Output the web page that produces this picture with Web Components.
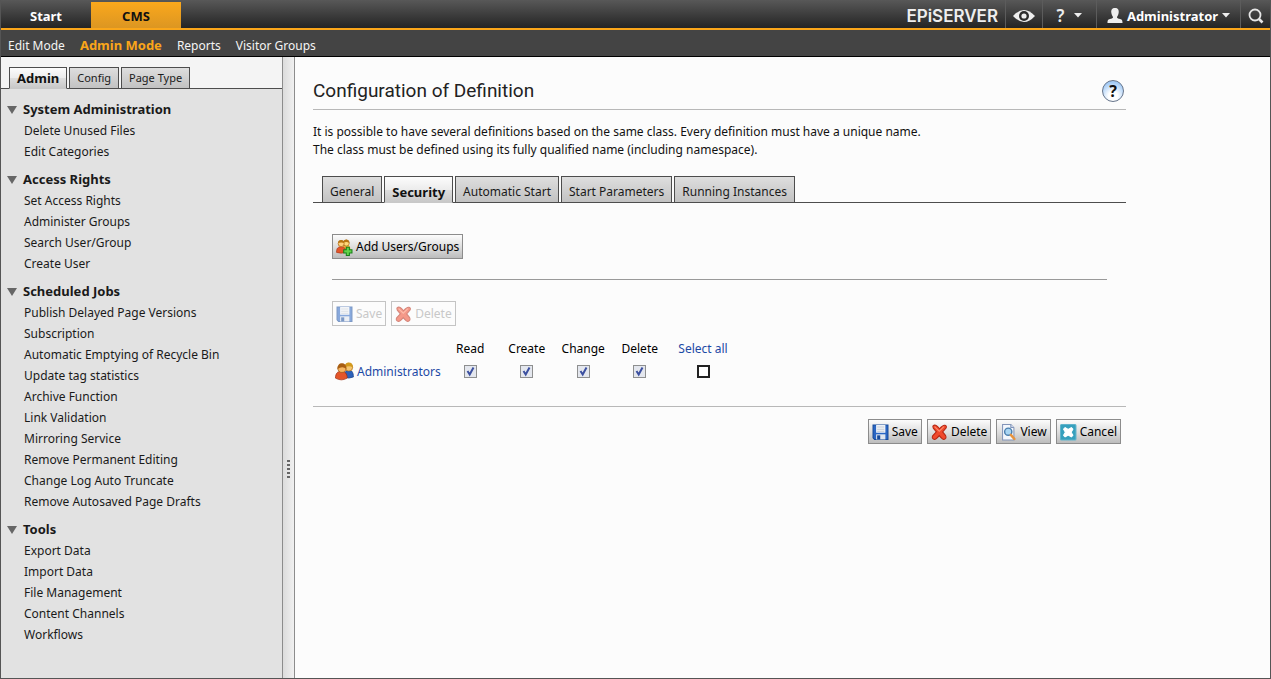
<!DOCTYPE html>
<html lang="en">
<head>
<meta charset="utf-8">
<meta name="viewport" content="width=device-width, initial-scale=1">
<title>Configuration of Definition</title>
<style>
body {
  margin: 0;
  font: 12px/16px "Noto Sans", "Open Sans", sans-serif;
  color: #1a1a1a;
  background: #fcfcfc;
  --line: #4d4d4d;
  --rule: #b8b8b8;
  --orange: #faa61a;
  --link: #1c4aa5;
  --strong: bold 13px/16px "Noto Sans", "Open Sans", sans-serif;
}
</style>
</head>
<body>
<cms-app>
  <top-bar slot="header"></top-bar>
  <sub-nav slot="header"></sub-nav>
  <side-bar slot="side">
    <nav-group heading="System Administration" items="Delete Unused Files|Edit Categories"></nav-group>
    <nav-group heading="Access Rights" items="Set Access Rights|Administer Groups|Search User/Group|Create User"></nav-group>
    <nav-group heading="Scheduled Jobs" items="Publish Delayed Page Versions|Subscription|Automatic Emptying of Recycle Bin|Update tag statistics|Archive Function|Link Validation|Mirroring Service|Remove Permanent Editing|Change Log Auto Truncate|Remove Autosaved Page Drafts"></nav-group>
    <nav-group heading="Tools" items="Export Data|Import Data|File Management|Content Channels|Workflows"></nav-group>
  </side-bar>
  <definition-page>
    <span slot="title">Configuration of Definition</span>
    <p slot="intro" style="margin:0">It is possible to have several definitions based on the same class. Every definition must have a unique name.<br>The class must be defined using its fully qualified name (including namespace).</p>
    <security-panel></security-panel>
    <tool-button slot="actions" icon="save">Save</tool-button>
    <tool-button slot="actions" icon="delete">Delete</tool-button>
    <tool-button slot="actions" icon="view">View</tool-button>
    <tool-button slot="actions" icon="cancel">Cancel</tool-button>
  </definition-page>
</cms-app>

<script>
function define(name, html) {
  customElements.define(name, class extends HTMLElement {
    connectedCallback() {
      if (this.shadowRoot) return;
      const root = this.attachShadow({ mode: 'open' });
      root.innerHTML = typeof html === 'function' ? html(this) : html;
    }
  });
}

const icons = {
  save: `<path d="M1 1h14.5v14H2.5L1 13.500z" fill="#2a66c4" stroke="#174a99"/><path d="M4 1h9v7.500H4z" fill="#f3f6fa"/><path d="M5 3h7M5 5h7M5 7h7" stroke="#c3cad4"/><path d="M4 10h9v5H4z" fill="#dfe5ee"/><path d="M5 11h3v4H5z" fill="#174a99"/>`,
  delete: `<path d="M3.500 1Q5.500 1 8.300 4.600Q11.500 .8 13.500 1.200Q15.800 2 14.500 4L11.300 7.700L14.200 11.300Q15.500 14.300 12.500 15Q11 15 8 11.300Q5 15 3.300 15Q.3 14 1.600 11.500L5.200 7.600L2.200 4Q1 1.500 3.500 1z" fill="#f0492c" stroke="#b52612"/><path d="M3.500 2.500L8 7L12.500 2.500" stroke="#ff8b6b" fill="none"/>`,
  view: `<path d="M2.500 .5h8l3 3v12h-11z" fill="#f4f7fc" stroke="#8294b8"/><path d="M10.500 .5v3h3" fill="#d3def0" stroke="#8294b8"/><circle cx="8" cy="7.500" r="3.500" fill="#a9d5f2" stroke="#4b7fae" stroke-width="1.400"/><path d="M10.500 10.500L14 14.500" stroke="#e8933c" stroke-width="2.400" stroke-linecap="round"/>`,
  cancel: `<rect x=".5" y=".5" width="15" height="15" rx="1" fill="#36a0bd" stroke="#5fb3cb"/><path d="M3.500 5L5 3.500L8 5.300L11 3.500L12.500 5L10.800 8L12.500 11L11 12.500L8 10.800L5 12.500L3.500 11L5.200 8z" fill="#fff" stroke="#fff" stroke-linejoin="round"/>`,
  users: `<path d="M8 13c0-4 1.500-6 4-6s4 2 4 6q-4 2-8 0z" fill="#2d62ba" stroke="#193f85" stroke-width=".6"/><circle cx="12" cy="4.500" r="3.400" fill="#f4c46f" stroke="#a86716" stroke-width=".6"/><path d="M8.500 5Q8.500 .5 12 .5T15.500 5Q12.500 2.500 8.500 5z" fill="#d39a1d"/><path d="M.4 14c0-4 1.800-6 5-6s5.200 2 5.200 6q-5 3-10.200 0z" fill="#e4562a" stroke="#9c2c10" stroke-width=".6"/><circle cx="6" cy="5.500" r="3.600" fill="#f6b662" stroke="#96520f" stroke-width=".6"/><path d="M2.200 6Q2.200 1 6 1t3.800 5Q6.500 3 2.200 6z" fill="#a85e12"/>`,
  add: `<path d="M6 11c0-4 1-5.500 4-5.500s4 1.500 4 5.500z" fill="#e9b238"/><circle cx="10" cy="4" r="2.900" fill="#ffd978" stroke="#a86716" stroke-width=".7"/><path d="M7 3.500Q7.500 .6 10 .6t3 3.200Q10.500 2 7 3.500z" fill="#b87512"/><path d="M.5 13c0-4 1.400-5.500 4.500-5.500S9.500 9 9.500 13q-4.500 1.500-9 0z" fill="#e4562a" stroke="#a53215" stroke-width=".6"/><circle cx="5" cy="4.500" r="2.900" fill="#ffd07c" stroke="#a86716" stroke-width=".7"/><path d="M2 4Q2 1 5 1t3 3Q5 2.600 2 4z" fill="#b87512"/><path d="M10 8h3v2.500h2.500v3H13V16h-3v-2.500H7.500v-3H10z" fill="#62d34a" stroke="#18801a"/>`
};
define('epi-icon', el => `<style>:host{display:block;width:17px;height:17px}svg{display:block;width:100%;height:100%}</style><svg viewBox="0 0 16.500 16.500" aria-hidden="true">${icons[el.getAttribute('name')]}</svg>`);

define('tool-button', el => `<style>
:host{display:block}
button{display:flex;align-items:center;gap:3px;height:25px;margin:0;padding:1px 3px 0;border:1px solid #8c8c8c;border-radius:0;background:linear-gradient(#fcfcfc,#dcdcdc 55%,#bcbcbc);font:inherit;color:#000}
button:disabled{background:none;border-color:#c4c4c4;color:#c8c8c8}
button:disabled epi-icon{opacity:.55}
</style><button type="button" ${el.hasAttribute('disabled') ? 'disabled' : ''}><epi-icon name="${el.getAttribute('icon')}"></epi-icon><slot></slot></button>`);

define('tab-strip', el => {
  const tabs = el.getAttribute('tabs').split('|');
  const current = el.getAttribute('current');
  return `<style>
:host{display:flex;gap:2px;padding-left:9px;border-bottom:1px solid var(--line)}
button{height:var(--tab-height,27px);margin:0 0 -1px;padding:var(--tab-drop,4px) 7px 0;border:1px solid var(--line);border-radius:0;background:linear-gradient(#dedede,#c2c2c2);font:inherit;color:inherit}
button[aria-selected=true]{font:var(--strong);background:linear-gradient(#fcfcfc,#ececec 50%,#dedede 51%,#c8c8c8);border-bottom-color:#c8c8c8;color:#111}
</style>` + tabs.map(t => `<button type="button" role="tab" aria-selected="${t === current}">${t}</button>`).join('');
});

define('cms-app', `<style>
:host{display:flex;flex-direction:column;min-height:100vh;box-sizing:border-box;border:1px solid #555;border-top:0}
.body{flex:1;display:flex}
.splitter{flex:none;width:11px;border:solid #8c8c8c;border-width:0 1px;background:linear-gradient(90deg,#dcdcdc,#f0f0f0);display:flex;flex-direction:column;align-items:center;justify-content:center;padding-top:202px;gap:2px}
.splitter i{width:3px;height:2px;background:#666}
main{flex:1;min-width:0}
</style><header><slot name="header"></slot></header>
<div class="body"><slot name="side"></slot><div class="splitter"><i></i><i></i><i></i><i></i><i></i></div><main><slot></slot></main></div>`);

define('top-bar', `<style>
:host{display:flex;height:28px;border-bottom:2px solid var(--orange);background:linear-gradient(#585858,#242424);color:#fff;font:var(--strong)}
a{color:inherit;text-decoration:none;display:flex;align-items:center;justify-content:center}
.tab{width:90px;padding-top:4px}
.on{margin-top:2px;padding-top:2px;background:linear-gradient(#fba81c,#dc9622);color:#111}
.logo{margin-left:auto;padding:6px 7px 0 0;font:600 17px/20px Inter,sans-serif;color:#eee}
.cell{border-left:1px solid #5c5c5c;box-sizing:border-box;height:28px;padding:3px 0 0;gap:4px;color:#eee}
svg{display:block}
.mark{font:600 17px/20px "Noto Sans",sans-serif}
</style>
<a class="tab" href="#start">Start</a><a class="tab on" href="#cms">CMS</a>
<span class="logo">EPiSERVER</span>
<a class="cell" style="width:37px" href="#preview" aria-label="Preview"><svg width="22" height="14" viewBox="0 0 22 14"><path d="M0 7Q11-5 22 7Q11 19 0 7z" fill="#eee"/><circle cx="11" cy="7" r="5" fill="#2c2c2c"/><circle cx="11" cy="7" r="2.600" fill="#eee"/></svg></a>
<a class="cell" style="width:54px;gap:10px" href="#help"><span class="mark">?</span><svg width="8" height="5" viewBox="0 0 8 5"><path d="M0 0h8L4 4.500z" fill="#eee"/></svg></a>
<a class="cell" style="width:144px" href="#user"><svg width="16" height="15" viewBox="0 0 16 15"><path d="M8 0c3 0 4 2 3.700 4.500C11.500 7 10.500 8 10 9c0 1 .5 1.300 2 1.800C15 11.500 15.500 12 15.500 15H.5c0-3 .5-3.500 3.500-4.200C5.500 10.300 6 10 6 9 5.500 8 4.500 7 4.300 4.500 4 2 5 0 8 0z" fill="#eee"/></svg><span style="color:#fff">Administrator</span><svg width="8" height="5" viewBox="0 0 8 5"><path d="M0 0h8L4 4.500z" fill="#eee"/></svg></a>
<a class="cell" style="width:30px" href="#search" aria-label="Search"><svg width="16" height="16" viewBox="0 0 16 16" fill="none" stroke="#e6e6e6"><circle cx="7" cy="7" r="5.500" stroke-width="1.800"/><path d="M11 11l3.500 3.500" stroke-width="2.600"/></svg></a>`);

define('sub-nav', `<style>
:host{display:flex;align-items:baseline;gap:15px;height:27px;padding:7px 7px 0;box-sizing:border-box;border-bottom:1px solid #000;background:#444;color:#f4f4f4}
a{color:inherit;text-decoration:none}
.on{color:var(--orange);font:var(--strong)}
</style><a href="#edit">Edit Mode</a><a class="on" href="#admin">Admin Mode</a><a href="#reports">Reports</a><a href="#visitors">Visitor Groups</a>`);

define('side-bar', `<style>
:host{display:block;flex:none;width:281px;background:#e2e2e2}
tab-strip{--tab-height:22px;--tab-drop:0;padding:10px 0 0 8px;background:#f4f4f4;font-size:11px}
nav{display:flex;flex-direction:column;gap:6px;padding-top:9px}
</style><tab-strip tabs="Admin|Config|Page Type" current="Admin"></tab-strip><nav><slot></slot></nav>`);

define('nav-group', el => `<style>
:host{display:block}
h2{display:flex;align-items:center;gap:6px;margin:0;padding-left:6px;font:var(--strong);line-height:22px}
svg{margin-top:2px}
ul{margin:0;padding:0 0 0 23px;list-style:none;line-height:21px}
a{color:inherit;text-decoration:none}
</style><h2><svg width="10" height="8" viewBox="0 0 10 8" aria-hidden="true"><path d="M0 0h10L5 8z" fill="#666"/></svg>${el.getAttribute('heading')}</h2>
<ul>${el.getAttribute('items').split('|').map(t => `<li><a href="#item">${t}</a></li>`).join('')}</ul>`);

define('help-button', `<style>
:host{display:block}
button{display:block;width:22px;height:22px;padding:0;border:1px solid #67758b;border-radius:50%;background:radial-gradient(circle at 50% 75%,#fff 25%,#a4cbf6 75%);font:bold 16px/18px "Noto Sans",sans-serif;color:#111}
</style><button type="button" aria-label="Help">?</button>`);

define('definition-page', `<style>
:host{display:block;max-width:813px;padding:18px 18px 24px}
.head{display:flex;justify-content:space-between;align-items:center;height:32px;border-bottom:1px solid var(--rule);padding:0 2px 2px 0}
h1{margin:0;font:19px/24px Roboto,Arial,sans-serif;color:#222}
.intro{padding:13px 0 17px;line-height:18px;color:#111}
.panel{padding:31px 19px 23px}
.actions{display:flex;justify-content:flex-end;gap:5px;padding:12px 5px 0 0;border-top:1px solid var(--rule)}
</style><div class="head"><h1><slot name="title"></slot></h1><help-button></help-button></div>
<div class="intro"><slot name="intro"></slot></div>
<tab-strip tabs="General|Security|Automatic Start|Start Parameters|Running Instances" current="Security"></tab-strip>
<div class="panel"><slot></slot></div>
<div class="actions"><slot name="actions"></slot></div>`);

const rights = ['Read', 'Create', 'Change', 'Delete'];
define('security-panel', `<style>
:host{display:block}
.row{display:flex;gap:5px}
hr{margin:20px 0 21px;border:0;border-top:1px solid #999}
table{margin-top:11px;border-collapse:collapse;table-layout:fixed;width:406px}
th,td{padding:0;height:23px;font-weight:normal;text-align:center}
thead{color:#000}
th:first-child{text-align:left;width:110px}
th:last-child,td:last-child{width:70px}
a{color:var(--link);text-decoration:none}
.name{display:flex;align-items:center;gap:3px;padding-left:3px}
.name epi-icon{width:19px;height:19px}
input{appearance:none;display:block;width:13px;height:13px;margin:0 auto;border:1px solid #8e8f8f;background:#e9ecf2}
input:checked{background:#e4e7ee url('data:image/svg+xml,<svg xmlns="http://www.w3.org/2000/svg" viewBox="0 0 11 11"><path d="M2.500 5l2.200 3.500L8.500 1.500" fill="none" stroke="%233c50a0" stroke-width="2"/></svg>')}
td:last-child input{border:2px solid #222;background:#fff}
</style><div class="row"><tool-button icon="add">Add Users/Groups</tool-button></div><hr>
<div class="row"><tool-button icon="save" disabled>Save</tool-button><tool-button icon="delete" disabled>Delete</tool-button></div>
<table><thead><tr><th aria-label="Name"></th>${rights.map(r => `<th scope="col">${r}</th>`).join('')}<th scope="col"><a href="#all">Select all</a></th></tr></thead>
<tbody><tr><th scope="row"><span class="name"><epi-icon name="users"></epi-icon><a href="#administrators">Administrators</a></span></th>${rights.map(r => `<td><input type="checkbox" checked aria-label="${r}"></td>`).join('')}<td><input type="checkbox" aria-label="Select all"></td></tr></tbody></table>`);
</script>
</body>
</html>
